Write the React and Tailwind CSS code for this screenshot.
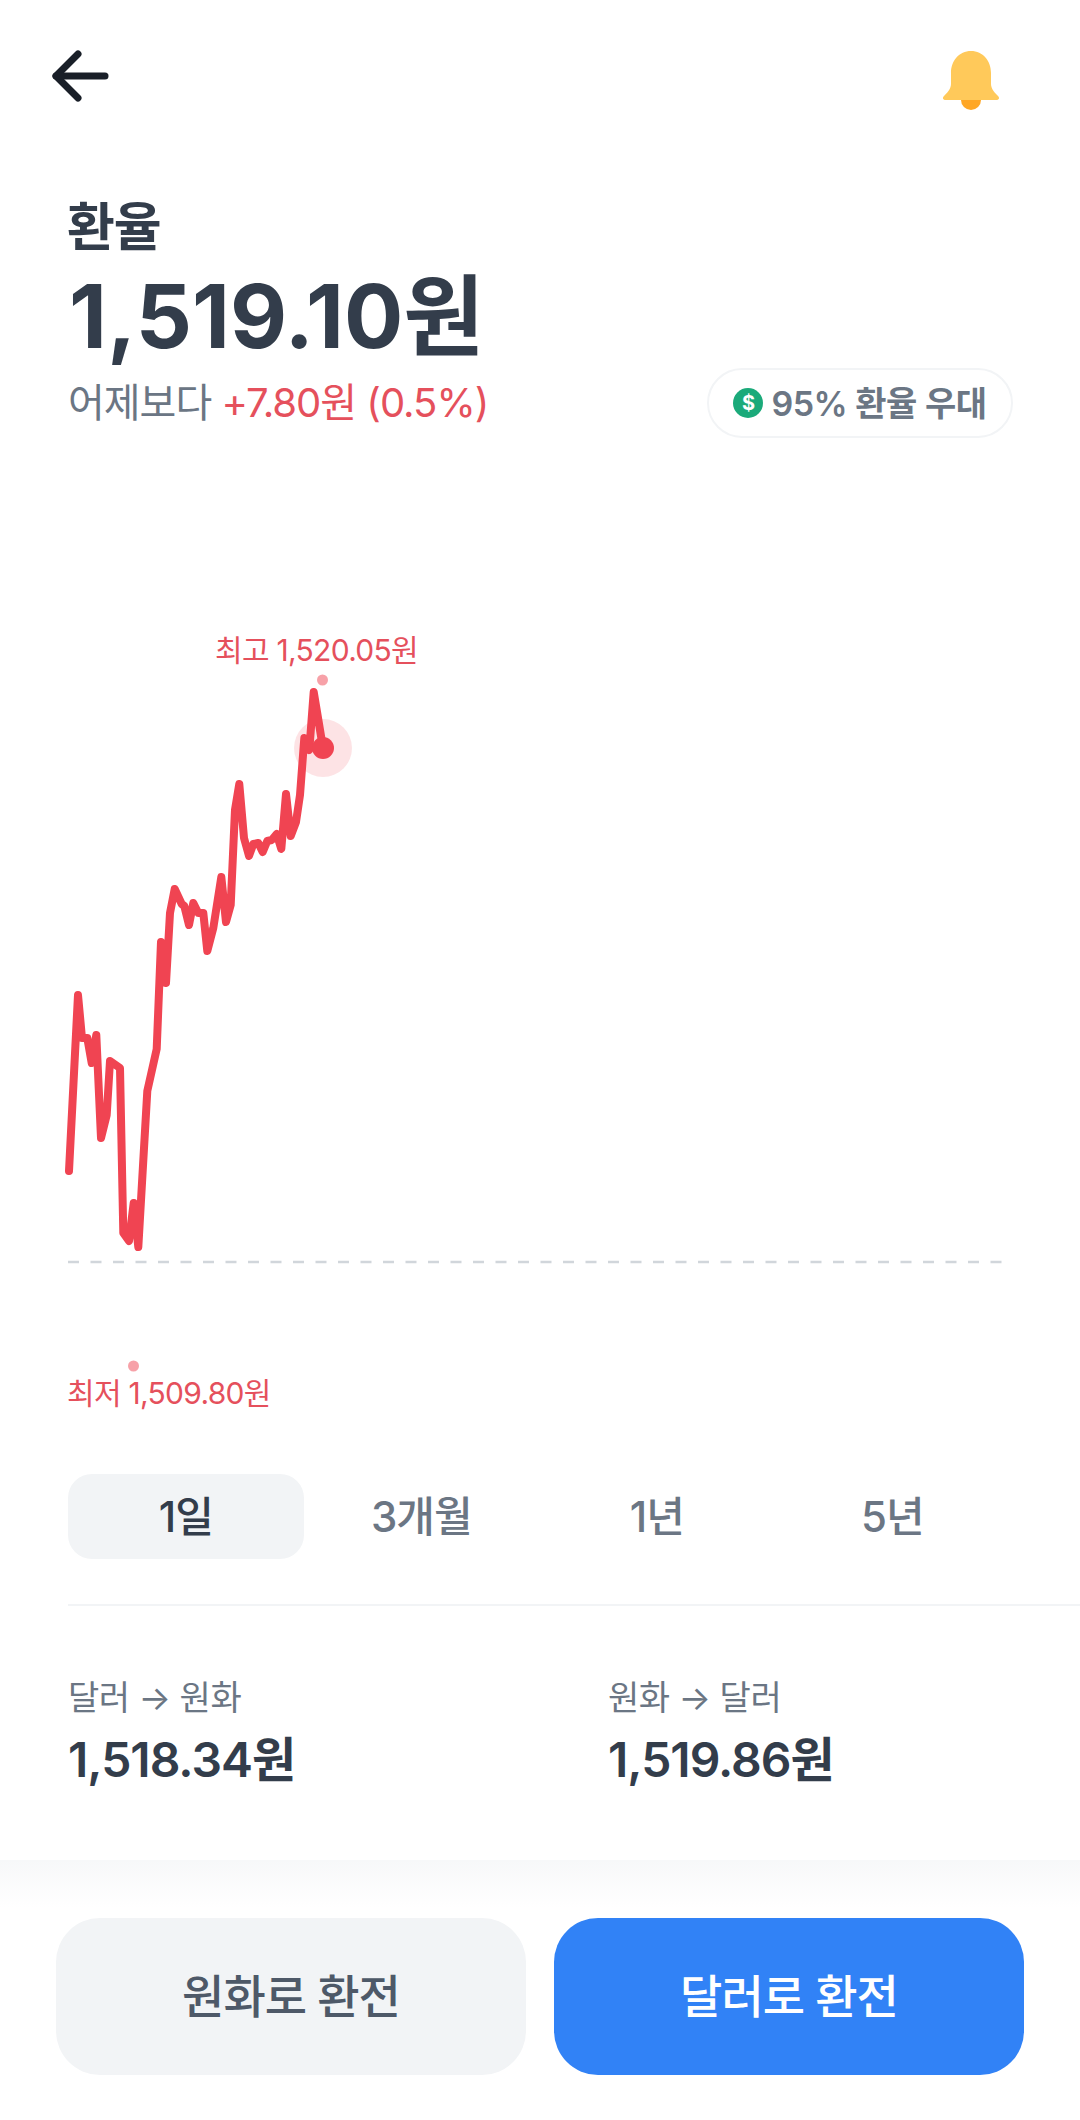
import React from 'react';

const CHART_POINTS = [
  [69, 1171], [78, 995], [82, 1038], [87.3, 1038], [91.7, 1063], [96.3, 1035], [101, 1138], [106.7, 1115],
  [110, 1061], [120, 1068], [123.3, 1233], [129, 1241], [133.7, 1203], [138.3, 1247], [147.3, 1091], [156.7, 1049],
  [161, 942], [166, 983], [170, 913], [174.7, 889], [181.7, 904], [184.3, 906], [189, 925], [193.3, 903],
  [198.3, 913], [203.3, 913], [207.3, 951], [213.3, 928], [221.3, 877], [226, 922], [230.7, 905], [235, 810],
  [239.3, 784], [244, 838], [249, 856], [253.3, 844], [258.3, 843], [262.7, 852], [267.3, 841], [271.7, 840],
  [276.7, 834], [281.3, 849], [286, 794], [290.7, 836], [296, 822], [300, 795], [304.3, 738], [309.3, 750],
  [313.7, 692], [323, 748],
];

const TABS = ['1일', '3개월', '1년', '5년'];

const RATES = [
  { label: '달러 → 원화', value: '1,518.34원' },
  { label: '원화 → 달러', value: '1,519.86원' },
];

const Chart = () => (
  <div className="relative h-[1036px]">
    <svg className="absolute inset-0 w-full h-full" viewBox="0 438 1080 1036" fill="none">
      <line x1="68" y1="1262" x2="1002" y2="1262" stroke="#d1d6db" strokeWidth="2.5" strokeDasharray="11 11.5" />
      <circle cx="323" cy="748" r="29" fill="#f04452" fillOpacity="0.15" />
      <polyline
        points={CHART_POINTS.map((p) => p.join(',')).join(' ')}
        stroke="#f04452"
        strokeWidth="8"
        strokeLinejoin="round"
        strokeLinecap="round"
      />
      <circle cx="323" cy="748" r="11" fill="#f04452" />
      <circle cx="322.5" cy="680" r="5.5" fill="#f04452" fillOpacity="0.5" />
      <circle cx="133.5" cy="1366" r="5.5" fill="#f04452" fillOpacity="0.5" />
    </svg>
    <span className="absolute left-[215px] top-[192px] text-[30px] leading-[40px] tracking-[-0.7px] text-[#e5505c] whitespace-nowrap">
      최고 1,520.05원
    </span>
    <span className="absolute left-[67px] top-[935px] text-[30px] leading-[40px] tracking-[-0.7px] text-[#e5505c] whitespace-nowrap">
      최저 1,509.80원
    </span>
  </div>
);

const App = () => (
  <div className="w-[1080px] h-[2120px] bg-white overflow-hidden font-['Inter','Noto_Sans_CJK_KR',sans-serif]">
    {/* Top bar */}
    <div className="h-[130px] flex justify-between items-start pt-[46px] pl-[48px] pr-[79px]">
      <svg className="w-[64px] h-[60px]" viewBox="0 0 64 60" fill="none" stroke="#191f28" strokeWidth="7" strokeLinecap="round" strokeLinejoin="round">
        <path d="M30 8 L8 30 L30 52" />
        <path d="M8 30 H57" />
      </svg>
      <svg className="w-[60px] h-[62px] mt-[4px]" viewBox="0 0 60 62">
        <path d="M20 49 H40 V50 A10 10 0 0 1 20 50 Z" fill="#ffa726" />
        <path d="M30 1 C42 1 50 11 50 23 V34 C50 39 54 43 57 46 C59 48 58 50 55 50 H5 C2 50 1 48 3 46 C6 43 10 39 10 34 V23 C10 11 18 1 30 1 Z" fill="#ffc95a" />
      </svg>
    </div>

    {/* Rate summary */}
    <div className="px-[68px] pr-[67px]">
      <h2 className="mt-[68px] -ml-[1px] text-[52px] leading-[60px] font-semibold tracking-[-1px] text-[#333d4b]">환율</h2>
      <p className="mt-[13px] ml-[1px] text-[88px] leading-[90px] font-bold text-[#333d4b]">1,519.10원</p>
      <div className="mt-[7px] h-[70px] flex items-center justify-between">
        <p className="text-[40px] tracking-[-1px] text-[#6b7684]">
          어제보다 <span className="text-[#e5505c]">+7.80원 (0.5%)</span>
        </p>
        <div className="h-[70px] w-[306px] flex items-center justify-center gap-[8px] rounded-full border-2 border-[#f2f4f6]">
          <span className="w-[30px] h-[30px] rounded-full bg-[#1baa7a] flex items-center justify-center text-[20px] leading-none font-bold text-white">$</span>
          <span className="text-[34px] font-semibold tracking-[-0.5px] text-[#6b7684]">95% 환율 우대</span>
        </div>
      </div>
    </div>

    <Chart />

    {/* Period tabs */}
    <div className="pl-[68px] flex">
      {TABS.map((tab, i) => (
        <div
          key={tab}
          className={
            i === 0
              ? 'w-[235.5px] h-[85px] flex items-center justify-center rounded-[24px] bg-[#f2f4f6] text-[42px] font-medium tracking-[-1px] text-[#333d4b]'
              : 'w-[235.5px] h-[85px] flex items-center justify-center text-[42px] font-medium tracking-[-1px] text-[#6b7684]'
          }
        >
          {tab}
        </div>
      ))}
    </div>

    <div className="ml-[68px] mt-[45px] h-[2px] bg-[#f2f4f6]" />

    {/* Buy and sell rates */}
    <div className="pl-[68px] mt-[72px] grid grid-cols-[540px_1fr]">
      {RATES.map((rate) => (
        <div key={rate.label}>
          <p className="text-[34px] leading-[40px] tracking-[-0.5px] text-[#6b7684]">{rate.label}</p>
          <p className="mt-[12px] text-[48px] leading-[60px] font-semibold tracking-[-1px] text-[#333d4b]">{rate.value}</p>
        </div>
      ))}
    </div>

    {/* Bottom actions */}
    <div className="mt-[70px] h-[48px] bg-gradient-to-b from-[#f7f8f9] to-white" />
    <div className="mt-[10px] pl-[56px] pr-[56px] flex gap-[28px]">
      <button className="flex-1 h-[157px] rounded-[44px] bg-[#f2f4f6] text-[46px] font-medium tracking-[-1px] text-[#4e5968]">원화로 환전</button>
      <button className="flex-1 h-[157px] rounded-[44px] bg-[#3182f6] text-[46px] font-medium tracking-[-1px] text-white">달러로 환전</button>
    </div>
  </div>
);

export default App;
